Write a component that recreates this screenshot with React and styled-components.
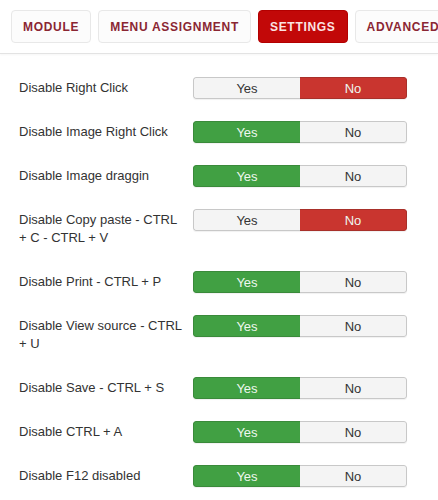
import React from "react";
import styled, { createGlobalStyle } from "styled-components";

const settings = [
  { label: "Disable Right Click", value: false },
  { label: "Disable Image Right Click", value: true },
  { label: "Disable Image draggin", value: true },
  { label: "Disable Copy paste - CTRL + C - CTRL + V", value: false },
  { label: "Disable Print - CTRL + P", value: true },
  { label: "Disable View source - CTRL + U", value: true },
  { label: "Disable Save - CTRL + S", value: true },
  { label: "Disable CTRL + A", value: true },
  { label: "Disable F12 disabled", value: true },
];

const tabs = ["Module", "Menu Assignment", "Settings", "Advanced"];

const App = () => {
  return (
    <>
      <GlobalStyle />
      <Page>
        <TabBar>
          {tabs.map((t) => (
            <Tab key={t} active={t === "Settings"}>{t}</Tab>
          ))}
        </TabBar>
        <List>
          {settings.map((s) => (
            <Row key={s.label}>
              <Label>{s.label}</Label>
              <Toggle>
                <Option on={s.value} kind="yes">Yes</Option>
                <Option on={!s.value} kind="no">No</Option>
              </Toggle>
            </Row>
          ))}
        </List>
      </Page>
    </>
  );
};

// style
const GlobalStyle = createGlobalStyle`
  html, body {
    margin: 0;
    padding: 0;
    background: #fff;
    font-family: "Liberation Sans", Arial, sans-serif;
  }
`;

const Page = styled.div`
  width: 438px;
  height: 500px;
  overflow: hidden;
  background: #fff;
`;

const TabBar = styled.div`
  display: flex;
  gap: 7px;
  padding: 10px 0 10px 11px;
  border-bottom: 1px solid #e3e3e3;
  box-shadow: 0 1px 2px rgba(0, 0, 0, 0.04);
  white-space: nowrap;
`;

const Tab = styled.div`
  flex: none;
  height: 33px;
  box-sizing: border-box;
  padding: 0 11px;
  display: flex;
  align-items: center;
  border-radius: 4px;
  border: 1px solid ${(p) => (p.active ? "#b30000" : "#e8e8e8")};
  background: ${(p) => (p.active ? "#c20808" : "#fcfcfc")};
  color: ${(p) => (p.active ? "#fbe3e3" : "#8a2633")};
  font-size: 12px;
  font-weight: bold;
  letter-spacing: 0.7px;
  text-transform: uppercase;
`;

const List = styled.div`
  padding-top: 12px;
`;

const Row = styled.div`
  display: flex;
  align-items: flex-start;
  padding: 13px 0;
`;

const Label = styled.div`
  flex: 0 0 165px;
  padding-left: 19px;
  margin-right: 9px;
  font-size: 13px;
  line-height: 18px;
  color: #333;
`;

const Toggle = styled.div`
  display: flex;
  width: 214px;
  height: 22px;
  margin: -2px 0;
  border-radius: 3px;
  overflow: hidden;
  box-shadow: 0 1px 1px rgba(0, 0, 0, 0.06);
`;

const Option = styled.div`
  flex: 1;
  display: flex;
  align-items: center;
  justify-content: center;
  font-size: 13px;
  box-sizing: border-box;
  border: 1px solid
    ${(p) => (p.on ? (p.kind === "yes" ? "#3a8a3a" : "#a8302a") : "#c8c8c8")};
  ${(p) => (p.kind === "yes" ? "border-right: none; border-radius: 3px 0 0 3px;" : "border-left: none; border-radius: 0 3px 3px 0;")}
  background: ${(p) =>
    p.on ? (p.kind === "yes" ? "#41a043" : "#c9352f") : "#f4f4f4"};
  color: ${(p) => (p.on ? "#eef7ee" : "#333")};
`;

export default App;
